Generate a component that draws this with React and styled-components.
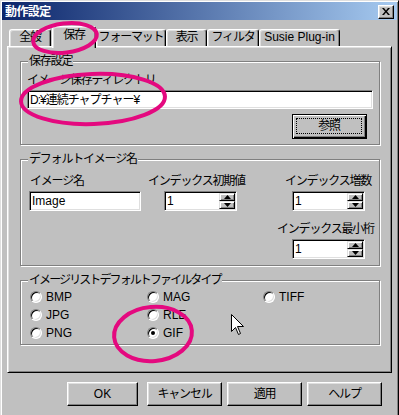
import React from "react";
import styled, { createGlobalStyle } from "styled-components";

const FACE = "#c0c0c0";
const PINK = "#e4097f";

const Global = createGlobalStyle`
  html, body { margin: 0; padding: 0; background: ${FACE}; overflow: hidden; }
  body {
    font-family: "Liberation Sans", "Noto Sans CJK JP", sans-serif;
    font-size: 12px;
    line-height: 14px;
    letter-spacing: -1.2px;
    color: #000;
  }
  * { box-sizing: border-box; }
`;

const Window = styled.div`
  position: relative;
  width: 399px;
  height: 420px;
  background: ${FACE};
  border: 1px solid;
  border-color: #dfdfdf #000 #000 #dfdfdf;
  box-shadow: inset 1px 1px 0 #fff, inset -1px -1px 0 #808080;
  padding: 1px;
  display: flex;
  flex-direction: column;
`;

const TitleBar = styled.div`
  height: 18px;
  display: flex;
  align-items: center;
  justify-content: space-between;
  padding: 0 3px 0 3px;
  background: linear-gradient(to right, #0a246a, #a6caf0);
`;

const Title = styled.span`
  color: #fff;
  font-family: "Noto Sans CJK JP", sans-serif;
  font-weight: bold;
  letter-spacing: -0.6px;
`;

const CloseBtn = styled.div`
  width: 16px;
  height: 14px;
  margin-top: 1px;
  background: ${FACE};
  border: 1px solid;
  border-color: #fff #000 #000 #fff;
  box-shadow: inset -1px -1px 0 #808080, inset 1px 1px 0 #dfdfdf;
  display: flex;
  align-items: center;
  justify-content: center;
`;

const Body = styled.div`
  display: flex;
  flex-direction: column;
  padding: 6px 5px 0 5px;
`;

const TabRow = styled.div`
  display: flex;
  align-items: flex-end;
  height: 20px;
  padding-left: 2px;
  position: relative;
  z-index: 2;
`;

const Tab = styled.div`
  width: ${(p) => p.$w}px;
  height: ${(p) => (p.$active ? 22 : 17)}px;
  margin-bottom: ${(p) => (p.$active ? -2 : 0)}px;
  margin-left: ${(p) => (p.$active ? 1 : 0)}px;
  background: ${FACE};
  border-top: 1px solid #fff;
  border-left: 1px solid #fff;
  border-right: 1px solid #000;
  border-radius: 3px 3px 0 0;
  box-shadow: inset -1px 0 0 #808080, inset 1px 1px 0 #dfdfdf;
  display: flex;
  justify-content: center;
  padding-top: ${(p) => (p.$active ? 1 : 0)}px;
  white-space: nowrap;
  letter-spacing: ${(p) => (p.$latin ? "0" : "-1.2px")};
  position: relative;
  z-index: ${(p) => (p.$active ? 2 : 1)};
`;

const Panel = styled.div`
  height: 327px;
  background: ${FACE};
  border: 1px solid;
  border-color: #fff #000 #000 #fff;
  box-shadow: inset 1px 1px 0 #dfdfdf, inset -1px -1px 0 #808080;
  padding: 14px 11px 0 12px;
  display: flex;
  flex-direction: column;
  gap: 14px;
`;

const Group = styled.div`
  position: relative;
  border: 1px solid #808080;
  box-shadow: inset 1px 1px 0 #fff, 1px 1px 0 #fff;
  padding: ${(p) => p.$pad};
`;

const Legend = styled.span`
  position: absolute;
  left: 7px;
  top: -8px;
  padding: 0 1px;
  background: ${FACE};
  white-space: nowrap;
  letter-spacing: ${(p) => p.$ls || "-1.2px"};
`;

const DirGroup = styled(Group)`
  display: flex;
  flex-direction: column;
`;

const Caption = styled.div`
  height: 14px;
  white-space: nowrap;
  margin-left: ${(p) => p.$ml || 0}px;
`;

const Sunken = styled.div`
  display: flex;
  align-items: stretch;
  width: ${(p) => (p.$w ? `${p.$w}px` : "auto")};
  height: ${(p) => p.$h}px;
  margin-top: 3px;
  background: #fff;
  border: 1px solid;
  border-color: #808080 #fff #fff #808080;
  box-shadow: inset 1px 1px 0 #000, inset -1px -1px 0 #dfdfdf;
  padding: 1px;
`;

const FieldText = styled.span`
  flex: 1;
  display: flex;
  align-items: center;
  padding-left: 1px;
  white-space: nowrap;
  letter-spacing: ${(p) => (p.$latin ? "0" : "-1px")};
`;

const SpinCol = styled.div`
  width: 16px;
  display: flex;
  flex-direction: column;
`;

const SpinHalf = styled.div`
  flex: 1;
  background: ${FACE};
  border: 1px solid;
  border-color: #dfdfdf #000 #000 #dfdfdf;
  box-shadow: inset 1px 1px 0 #fff, inset -1px -1px 0 #808080;
  display: flex;
  align-items: center;
  justify-content: center;
`;

const Button = styled.div`
  width: ${(p) => p.$w || 75}px;
  height: ${(p) => p.$h || 24}px;
  margin-right: ${(p) => p.$mr || 0}px;
  background: ${FACE};
  border: 1px solid;
  border-color: ${(p) => (p.$default ? "#000" : "#fff #000 #000 #fff")};
  box-shadow: ${(p) =>
    p.$default
      ? "inset 1px 1px 0 #fff, inset -1px -1px 0 #000, inset -2px -2px 0 #808080"
      : "inset -1px -1px 0 #808080, inset 1px 1px 0 #dfdfdf"};
  display: flex;
  align-items: stretch;
  justify-content: center;
  padding: ${(p) => (p.$default ? "3px 4px 4px 3px" : "0")};
  letter-spacing: ${(p) => (p.$latin ? "0" : "-1.2px")};
`;

const BtnLabel = styled.span`
  flex: 1;
  display: flex;
  align-items: center;
  justify-content: center;
  border: ${(p) => (p.$focus ? "1px dotted #000" : "none")};
`;

const BrowseBtn = styled(Button)`
  align-self: flex-end;
  margin-top: 5px;
  margin-right: 6px;
`;

const NameGrid = styled(Group)`
  display: grid;
  grid-template-columns: 135px 128px 73px;
  row-gap: 11px;
`;

const FieldBox = styled.div`
  grid-column: ${(p) => p.$col || "auto"};
  display: flex;
  flex-direction: column;
`;

const RadioGrid = styled(Group)`
  display: grid;
  grid-template-columns: 117px 116px auto;
  grid-template-rows: repeat(3, 18px);
  grid-auto-flow: column;
`;

const Radio = styled.label`
  display: flex;
  align-items: center;
  gap: 4px;
  letter-spacing: 0;
`;

const RadioDot = styled.span`
  width: 12px;
  height: 12px;
  border-radius: 50%;
  background: #fff;
  border: 1px solid;
  border-color: #808080 #fff #fff #808080;
  box-shadow: inset 1px 1px 0 #000, inset -1px -1px 0 #dfdfdf;
  display: flex;
  align-items: center;
  justify-content: center;
  &::after {
    content: "";
    width: 4px;
    height: 4px;
    border-radius: 50%;
    background: ${(p) => (p.$checked ? "#000" : "transparent")};
  }
`;

const ButtonRow = styled.div`
  display: flex;
  justify-content: flex-end;
  gap: 5px;
  margin-top: 9px;
  padding-right: 10px;
`;

const Overlay = styled.svg`
  position: absolute;
  left: 0;
  top: 0;
  pointer-events: none;
  z-index: 10;
`;

const Arrow = ({ up }) => (
  <svg width="7" height="4" viewBox="0 0 7 4">
    {up ? <path d="M3.5 0 L7 4 L0 4 Z" fill="#000" /> : <path d="M0 0 L7 0 L3.5 4 Z" fill="#000" />}
  </svg>
);

const Spinner = ({ w = 73 }) => (
  <Sunken $w={w} $h={20}>
    <FieldText $latin>1</FieldText>
    <SpinCol>
      <SpinHalf>
        <Arrow up />
      </SpinHalf>
      <SpinHalf>
        <Arrow />
      </SpinHalf>
    </SpinCol>
  </Sunken>
);

const tabs = [
  { t: "全般", w: 42 },
  { t: "保存", w: 44, active: true },
  { t: "フォーマット", w: 70 },
  { t: "表示", w: 41 },
  { t: "フィルタ", w: 52 },
  { t: "Susie Plug-in", w: 81, latin: true },
];

const radios = [
  { t: "BMP" },
  { t: "JPG" },
  { t: "PNG" },
  { t: "MAG" },
  { t: "RLE" },
  { t: "GIF", checked: true },
  { t: "TIFF" },
];

export default function App() {
  return (
    <>
      <Global />
      <Window>
        <TitleBar>
          <Title>動作設定</Title>
          <CloseBtn>
            <svg width="8" height="7" viewBox="0 0 8 7">
              <path d="M0 0 L2 0 L4 2.5 L6 0 L8 0 L5 3.5 L8 7 L6 7 L4 4.5 L2 7 L0 7 L3 3.5 Z" fill="#000" />
            </svg>
          </CloseBtn>
        </TitleBar>
        <Body>
          <TabRow>
            {tabs.map((tb) => (
              <Tab key={tb.t} $w={tb.w} $active={tb.active} $latin={tb.latin}>
                {tb.t}
              </Tab>
            ))}
          </TabRow>
          <Panel>
            <DirGroup $pad="11px 6px 5px 6px">
              <Legend>保存設定</Legend>
              <Caption>イメージ保存ディレクトリ</Caption>
              <Sunken $h={19}>
                <FieldText>D:¥連続チャプチャー¥</FieldText>
              </Sunken>
              <BrowseBtn $default $h={25}>
                <BtnLabel $focus>参照</BtnLabel>
              </BrowseBtn>
            </DirGroup>

            <NameGrid $pad="14px 0 6px 8px">
              <Legend>デフォルトイメージ名</Legend>
              <FieldBox>
                <Caption $ml={1}>イメージ名</Caption>
                <Sunken $w={112} $h={20}>
                  <FieldText $latin>Image</FieldText>
                </Sunken>
              </FieldBox>
              <FieldBox>
                <Caption $ml={-16}>インデックス初期値</Caption>
                <Spinner />
              </FieldBox>
              <FieldBox>
                <Caption $ml={-7}>インデックス増数</Caption>
                <Spinner />
              </FieldBox>
              <FieldBox $col="3">
                <Caption $ml={-15}>インデックス最小桁</Caption>
                <Spinner />
              </FieldBox>
            </NameGrid>

            <RadioGrid $pad="7px 0 2px 9px">
              <Legend $ls="-1.9px">イメージリストデフォルトファイルタイプ</Legend>
              {radios.map((r) => (
                <Radio key={r.t}>
                  <RadioDot $checked={r.checked} />
                  {r.t}
                </Radio>
              ))}
            </RadioGrid>
          </Panel>
          <ButtonRow>
            <Button $w={71} $mr={4} $latin>
              <BtnLabel>OK</BtnLabel>
            </Button>
            <Button>
              <BtnLabel>キャンセル</BtnLabel>
            </Button>
            <Button>
              <BtnLabel>適用</BtnLabel>
            </Button>
            <Button>
              <BtnLabel>ヘルプ</BtnLabel>
            </Button>
          </ButtonRow>
        </Body>
        <Overlay width="399" height="415" viewBox="0 0 399 415">
          <ellipse cx="64" cy="37" rx="32" ry="14.5" fill="none" stroke={PINK} strokeWidth="4" transform="rotate(-7 64 37)" />
          <ellipse cx="92" cy="98" rx="72" ry="25" fill="none" stroke={PINK} strokeWidth="4" transform="rotate(-2 92 98)" />
          <ellipse cx="152" cy="333" rx="39" ry="27" fill="none" stroke={PINK} strokeWidth="4" transform="rotate(-5 152 333)" />
          <path
            d="M230.5 313.5 L230.5 330.5 L234.5 326.5 L237.5 333.5 L239.5 332.5 L236.5 325.5 L242.5 325.5 Z"
            fill="#fff"
            stroke="#000"
            strokeWidth="1"
          />
        </Overlay>
      </Window>
    </>
  );
}
